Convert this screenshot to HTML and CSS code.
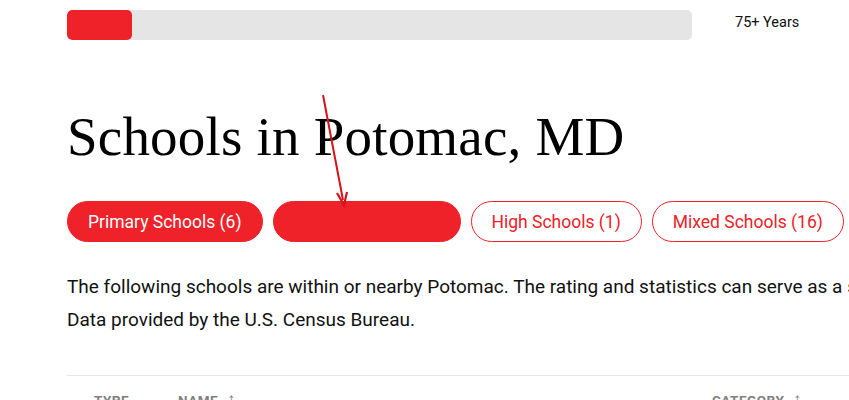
FILE: index.html
```html
<!DOCTYPE html>
<html>
<head>
<meta charset="utf-8">
<link rel="stylesheet" href="styles.css">
</head>
<body>
<div class="page">
  <div class="progress-row">
    <div class="bar"><div class="fill"></div></div>
    <div class="bar-label">75+ Years</div>
  </div>
  <h1 class="title">Schools in Potomac, MD</h1>
  <div class="tabs">
    <button class="tab tab-active">Primary Schools (6)</button>
    <button class="tab tab-active tab-blank"></button>
    <button class="tab">High Schools (1)</button>
    <button class="tab">Mixed Schools (16)</button>
  </div>
  <p class="intro"><span class="line">The following schools are within or nearby Potomac. The rating and statistics can serve as a starting point to make baseline comparisons on the right schools for your family.</span><span class="line">Data provided by the U.S. Census Bureau.</span></p>
  <div class="table-head">
    <span class="th th-type">Type</span>
    <span class="th th-name">Name <span class="sort">&#8593;</span></span>
    <span class="th th-cat">Category <span class="sort">&#8593;</span></span>
  </div>
  <svg class="arrow" width="60" height="130" viewBox="0 0 60 130">
    <line x1="3" y1="1" x2="23" y2="106" stroke="#d6121b" stroke-width="2"/>
    <polyline points="17,99 24,111 27,98" fill="none" stroke="#d6121b" stroke-width="2.2" stroke-linejoin="miter"/>
  </svg>
</div>
</body>
</html>
```
FILE: styles.css
```css
html, body {
  margin: 0;
  padding: 0;
  overflow: hidden;
  background: #fff;
}
.page {
  position: relative;
  width: 1200px;
  padding-left: 67px;
  font-family: Roboto, "Liberation Sans", sans-serif;
  color: #111;
}
.progress-row {
  display: flex;
  align-items: center;
  padding-top: 10px;
}
.bar {
  width: 625px;
  height: 30px;
  background: #e5e5e5;
  border-radius: 5px;
  overflow: hidden;
}
.fill {
  width: 65px;
  height: 100%;
  background: #ef2129;
  border-radius: 5px;
}
.bar-label {
  margin-left: 43px;
  font-size: 14.5px;
  color: #111;
  margin-top: -6px;
}
.title {
  margin: 64px 0 0;
  font-family: "Liberation Serif", "DejaVu Serif", serif;
  font-weight: 400;
  font-size: 55px;
  line-height: 66px;
  color: #000;
  letter-spacing: 0.2px;
}
.tabs {
  display: flex;
  gap: 10px;
  margin-top: 31px;
}
.tab {
  height: 41px;
  padding: 0 20px;
  border-radius: 21px;
  border: 1px solid #ef2129;
  background: #fff;
  color: #ef2129;
  font-family: Roboto, "Liberation Sans", sans-serif;
  font-size: 17.5px;
}
.tab-active {
  background: #ef2129;
  color: #fff;
}
.tab-blank {
  width: 188px;
}
.intro {
  margin: 28px 0 0;
  font-size: 19px;
  line-height: 33px;
  color: #111;
}
.line {
  display: block;
  white-space: nowrap;
}
.table-head {
  margin-top: 39px;
  border-top: 1px solid #e5e5e5;
  padding-top: 13px;
  display: flex;
  align-items: baseline;
  font-size: 13.5px;
  font-weight: 700;
  text-transform: uppercase;
  color: #808080;
  letter-spacing: 0.5px;
}
.th-type { margin-left: 27px; width: 84px; }
.th-name { width: 534px; }
.sort { margin-left: 5px; font-size: 17px; font-weight: 400; }
.arrow {
  position: absolute;
  left: 320px;
  top: 94px;
}
```
